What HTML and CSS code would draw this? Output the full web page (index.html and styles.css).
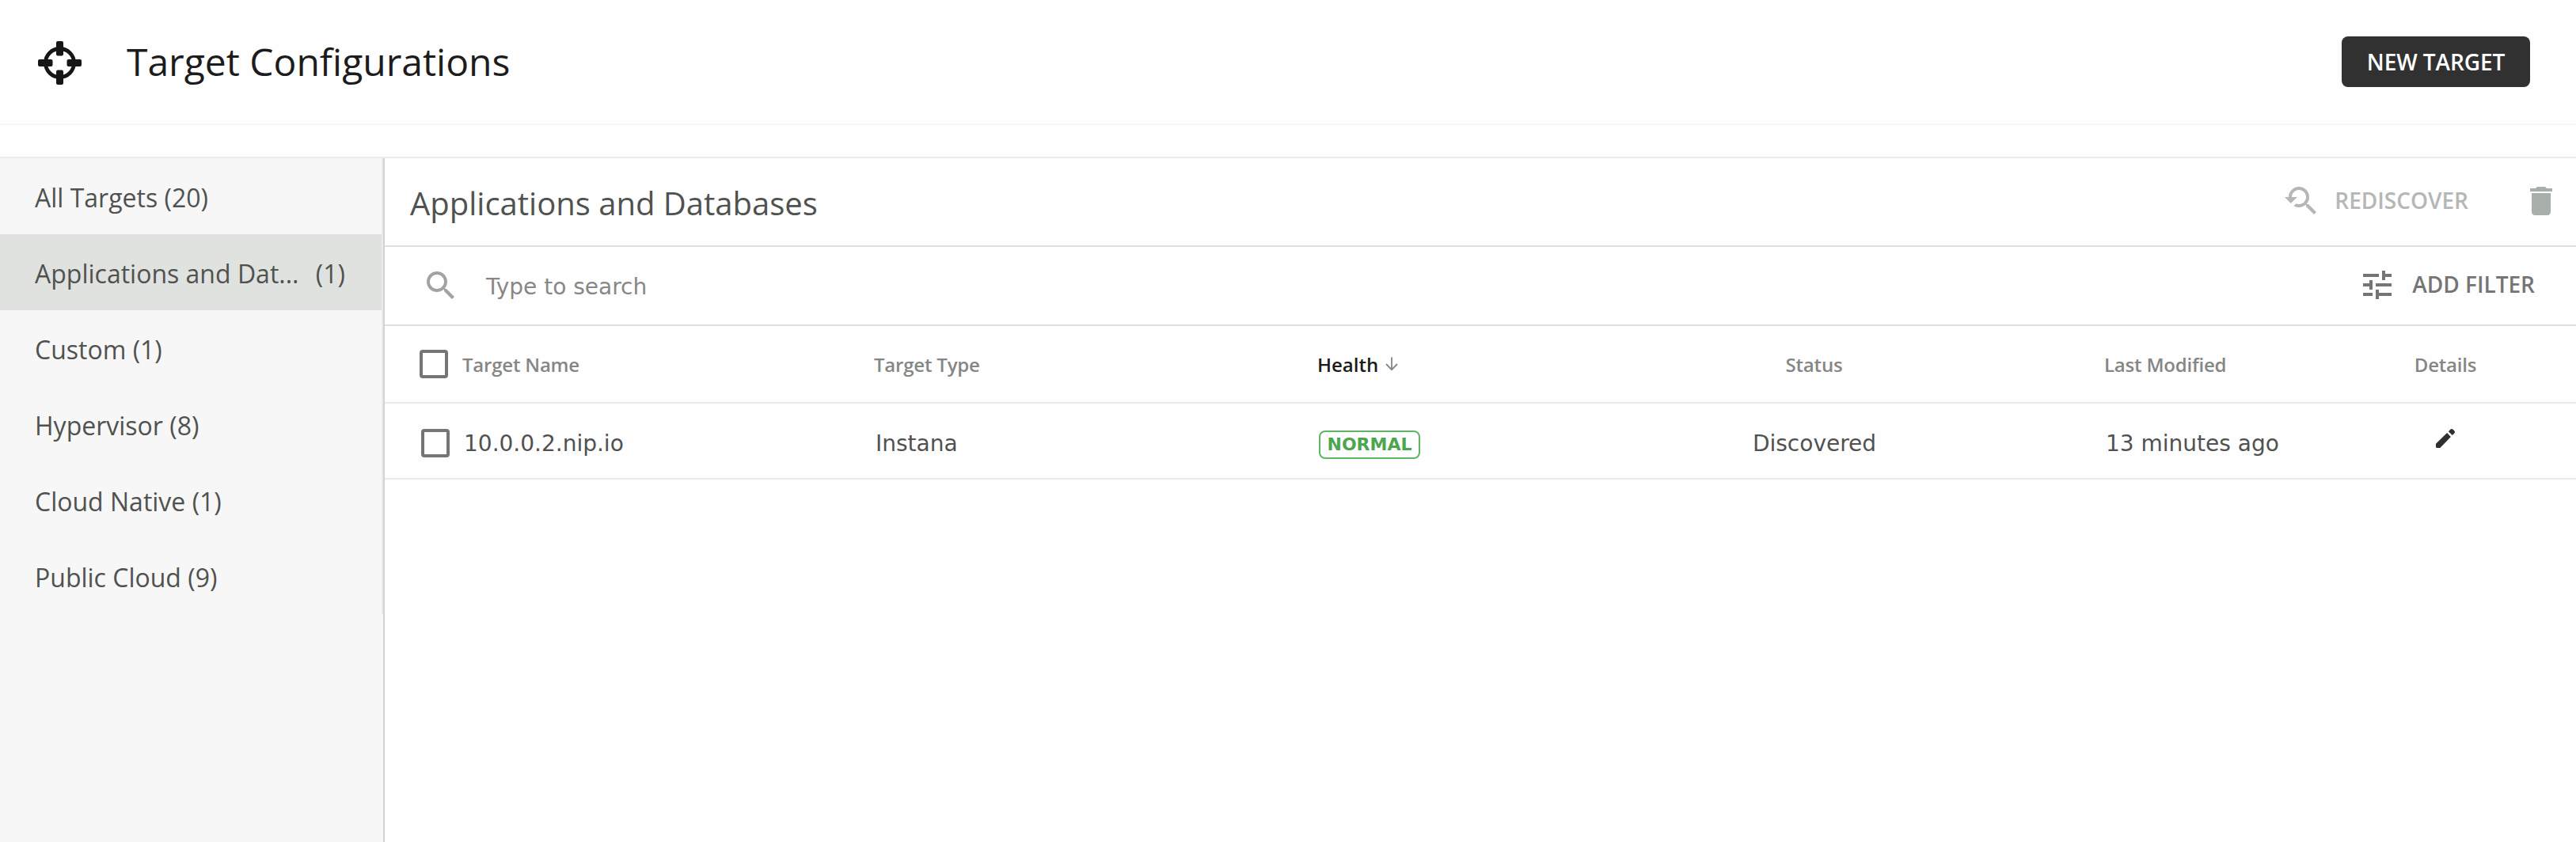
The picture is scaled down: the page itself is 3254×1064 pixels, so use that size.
FILE: index.html
```html
<!DOCTYPE html>
<html lang="en">
<head>
<meta charset="utf-8">
<title>Target Configurations</title>
<link rel="stylesheet" href="styles.css">
</head>
<body>
<header class="topbar">
  <svg class="topbar-icon" viewBox="0 0 55 55"><circle cx="27.5" cy="27.5" r="18" fill="none" stroke="#161616" stroke-width="4.8"/><g fill="#161616"><rect x="23" y="0" width="9" height="18.5" rx="2"/><rect x="23" y="36.5" width="9" height="18.5" rx="2"/><rect x="0" y="23" width="18.5" height="9" rx="2"/><rect x="36.5" y="23" width="18.5" height="9" rx="2"/></g></svg>
  <h1 class="topbar-title">Target Configurations</h1>
  <button class="new-target">NEW TARGET</button>
</header>
<main class="workspace">
  <nav class="sidebar">
    <ul class="category-list">
      <li class="category">All Targets (20)</li>
      <li class="category selected"><span>Applications and Dat...</span><span>(1)</span></li>
      <li class="category">Custom (1)</li>
      <li class="category">Hypervisor (8)</li>
      <li class="category">Cloud Native (1)</li>
      <li class="category">Public Cloud (9)</li>
    </ul>
  </nav>
  <section class="content">
    <div class="content-head">
      <h2 class="content-title">Applications and Databases</h2>
      <button class="action rediscover"><svg class="icon" viewBox="0 0 24 24"><path d="M17.01 14h-.8l-.27-.27c.98-1.14 1.57-2.61 1.57-4.23 0-3.59-2.91-6.5-6.5-6.5s-6.5 3-6.5 6.5H2l3.84 4 4.16-4H6.51C6.51 7 8.53 5 11.01 5s4.5 2.01 4.5 4.5c0 2.48-2.02 4.5-4.5 4.5-.65 0-1.26-.14-1.82-.38L7.71 15.1c.97.57 2.09.9 3.3.9 1.61 0 3.08-.59 4.22-1.57l.27.27v.79l5.01 4.99L22 19l-4.99-5z"/></svg><span>REDISCOVER</span></button>
      <svg class="icon trash" viewBox="0 0 24 24"><path d="M6 19c0 1.1.9 2 2 2h8c1.1 0 2-.9 2-2V7H6v12zM19 4h-3.5l-1-1h-5l-1 1H5v2h14V4z"/></svg>
    </div>
    <div class="search-bar">
      <svg class="icon search-icon" viewBox="0 0 24 24"><path d="M15.5 14h-.79l-.28-.27C15.41 12.59 16 11.11 16 9.5 16 5.91 13.09 3 9.5 3S3 5.91 3 9.5 5.91 16 9.5 16c1.61 0 3.09-.59 4.23-1.57l.27.28v.79l5 4.99L20.49 19l-4.99-5zm-6 0C7.01 14 5 11.99 5 9.5S7.01 5 9.5 5 14 7.01 14 9.5 11.99 14 9.5 14z"/></svg>
      <span class="search-hint">Type to search</span>
      <button class="action add-filter"><svg class="icon" viewBox="0 0 24 24"><path d="M3 17v2h6v-2H3zM3 5v2h10V5H3zm10 16v-2h8v-2h-8v-2h-2v6h2zM7 9v2H3v2h4v2h2V9H7zm14 4v-2H11v2h10zm-6-4h2V7h4V5h-4V3h-2v6z"/></svg><span>ADD FILTER</span></button>
    </div>
    <div class="row row-head">
      <i class="checkbox"></i>
      <span class="cell">Target Name</span>
      <span class="cell">Target Type</span>
      <span class="cell sorted"><span>Health</span><svg class="sort-arrow" viewBox="0 0 16 18"><path d="M8 .5v15.500M1 9l7 7.200L15 9" fill="none" stroke="#858585" stroke-width="1.800"/></svg></span>
      <span class="cell status">Status</span>
      <span class="cell">Last Modified</span>
      <span class="cell details">Details</span>
    </div>
    <div class="row row-item">
      <i class="checkbox"></i>
      <span class="cell">10.0.0.2.nip.io</span>
      <span class="cell">Instana</span>
      <span><b class="badge">NORMAL</b></span>
      <span class="cell status">Discovered</span>
      <span class="cell">13 minutes ago</span>
      <span class="details"><svg class="edit" viewBox="0 0 24 24"><path d="M0 18.700V22.500a1.500 1.500 0 0 0 1.500 1.500H5.300L18.900 9.900 14.100 5.100zM15.900 3.300l4.800 4.800 2.700-2.700a2 2 0 0 0 0-2.800l-2-2a2 2 0 0 0-2.800 0z"/></svg></span>
    </div>
  </section>
</main>
</body>
</html>
```
FILE: styles.css
```css
* { box-sizing: border-box; }
body { margin: 0; height: 1064px; display: flex; flex-direction: column; background: #fefefe; font-family: "Open Sans", sans-serif; color: #505250; overflow: hidden; }
button { border: 0; margin: 0; padding: 0; background: none; font: 600 28px/40px "Open Sans", sans-serif; }

.topbar { display: flex; align-items: center; height: 158px; padding: 0 58px 0 48px; border-bottom: 2px solid #f6f6f6; flex: none; }
.topbar-icon { width: 55px; height: 55px; margin-top: 2px; }
.topbar-title { flex: 1; margin: 0 0 0 57px; font-size: 48px; font-weight: 400; line-height: 64px; color: #1c1c1c; }
.new-target { width: 238px; height: 64px; padding-bottom: 1px; border-radius: 8px; background: #313131; color: #fefefe; letter-spacing: -0.1px; }

.workspace { display: flex; flex: 1; margin-top: 40px; border-top: 2px solid #ececec; min-height: 0; }
.sidebar { width: 486px; background: #f7f7f7; border-right: 2px solid #d3d3d3; }
.category-list { list-style: none; margin: 0; padding: 0; border-right: 2px solid #ebebeb; }
.category { display: flex; align-items: center; justify-content: space-between; height: 96px; padding: 3px 46px 0 44px; font-size: 32px; line-height: 48px; white-space: nowrap; }
.category.selected { background: #e0e2df; }

.content { flex: 1; min-width: 0; }
.icon { width: 48px; height: 48px; fill: currentColor; flex: none; }
.content-head { display: flex; align-items: center; height: 112px; padding: 0 20px 2px 32px; border-bottom: 2px solid #e0e0e0; }
.content-title { flex: 1; margin: 6px 0 0; font-size: 40px; font-weight: 400; line-height: 56px; }
.action { display: flex; align-items: center; gap: 20px; }
.action span { padding-bottom: 2px; }
.rediscover { gap: 19px; color: #b4b8b5; }
.trash { margin-left: 68px; color: #a9afaa; }
.search-bar { display: flex; align-items: center; height: 100px; padding: 0 52px 2px 47px; border-bottom: 2px solid #e0e0e0; }
.search-icon { margin-top: 2px; color: #a0a3a0; }
.search-hint { flex: 1; margin: 5px 0 0 33px; font: 28px/40px "DejaVu Sans", sans-serif; color: #868886; }
.add-filter { color: #757575; }

.row { display: grid; grid-template-columns: 54px 520px 560px 484px 510px 282px 1fr; align-items: center; border-bottom: 2px solid #ebebeb; padding-left: 44px; white-space: nowrap; }
.row-head { height: 98px; font-size: 24px; font-weight: 600; letter-spacing: -0.2px; color: #858785; }
.row-item { height: 96px; padding: 6px 2px 0 46px; font: 28px/40px "DejaVu Sans", sans-serif; }
.row-item .cell { padding-top: 2px; }
.checkbox { width: 36px; height: 36px; border: 4px solid #757575; border-radius: 4px; }
.status { padding-right: 223px; text-align: center; }
.row-item .status { padding-right: 226px; }
.details { padding-right: 16px; text-align: center; }
.sorted { display: flex; align-items: center; gap: 9px; letter-spacing: 0; color: #1c1c1c; }
.sort-arrow { width: 16px; height: 18px; }
.badge { display: block; width: 128px; height: 36px; margin-top: 4px; border: 2px solid #60b563; border-radius: 8px; text-align: center; font-size: 22px; line-height: 32px; color: #4ba64e; }
.edit { display: block; width: 24px; height: 24px; margin: 0 auto 12px; fill: #303030; overflow: visible; }
```
